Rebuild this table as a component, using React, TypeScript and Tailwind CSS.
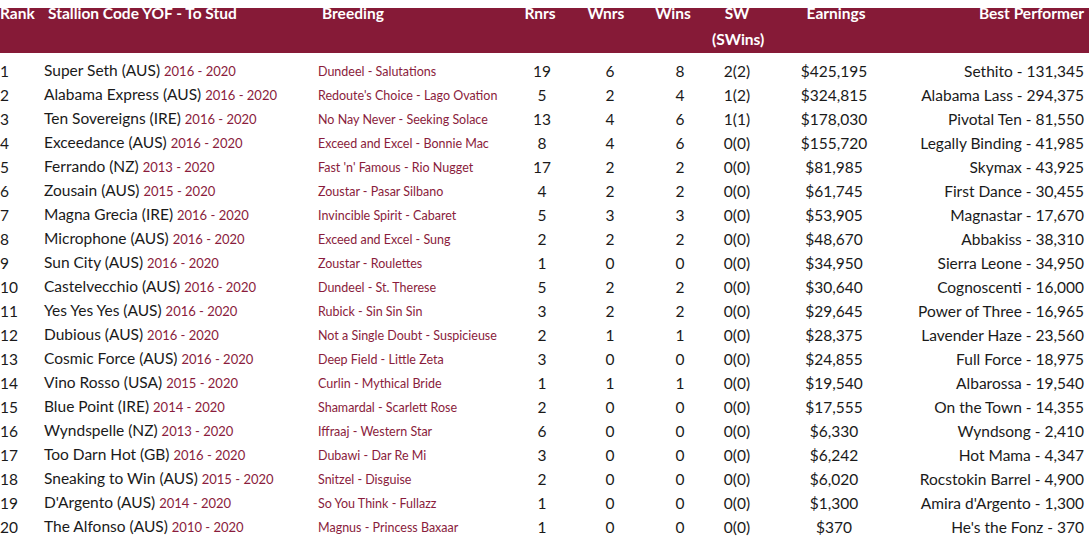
import React from "react";

type Row = [string, string, string, string, string, string, string, string, string, string];

const rows: Row[] = [
  ["1", "Super Seth (AUS)", "2016 - 2020", "Dundeel - Salutations", "19", "6", "8", "2(2)", "$425,195", "Sethito - 131,345"],
  ["2", "Alabama Express (AUS)", "2016 - 2020", "Redoute's Choice - Lago Ovation", "5", "2", "4", "1(2)", "$324,815", "Alabama Lass - 294,375"],
  ["3", "Ten Sovereigns (IRE)", "2016 - 2020", "No Nay Never - Seeking Solace", "13", "4", "6", "1(1)", "$178,030", "Pivotal Ten - 81,550"],
  ["4", "Exceedance (AUS)", "2016 - 2020", "Exceed and Excel - Bonnie Mac", "8", "4", "6", "0(0)", "$155,720", "Legally Binding - 41,985"],
  ["5", "Ferrando (NZ)", "2013 - 2020", "Fast 'n' Famous - Rio Nugget", "17", "2", "2", "0(0)", "$81,985", "Skymax - 43,925"],
  ["6", "Zousain (AUS)", "2015 - 2020", "Zoustar - Pasar Silbano", "4", "2", "2", "0(0)", "$61,745", "First Dance - 30,455"],
  ["7", "Magna Grecia (IRE)", "2016 - 2020", "Invincible Spirit - Cabaret", "5", "3", "3", "0(0)", "$53,905", "Magnastar - 17,670"],
  ["8", "Microphone (AUS)", "2016 - 2020", "Exceed and Excel - Sung", "2", "2", "2", "0(0)", "$48,670", "Abbakiss - 38,310"],
  ["9", "Sun City (AUS)", "2016 - 2020", "Zoustar - Roulettes", "1", "0", "0", "0(0)", "$34,950", "Sierra Leone - 34,950"],
  ["10", "Castelvecchio (AUS)", "2016 - 2020", "Dundeel - St. Therese", "5", "2", "2", "0(0)", "$30,640", "Cognoscenti - 16,000"],
  ["11", "Yes Yes Yes (AUS)", "2016 - 2020", "Rubick - Sin Sin Sin", "3", "2", "2", "0(0)", "$29,645", "Power of Three - 16,965"],
  ["12", "Dubious (AUS)", "2016 - 2020", "Not a Single Doubt - Suspicieuse", "2", "1", "1", "0(0)", "$28,375", "Lavender Haze - 23,560"],
  ["13", "Cosmic Force (AUS)", "2016 - 2020", "Deep Field - Little Zeta", "3", "0", "0", "0(0)", "$24,855", "Full Force - 18,975"],
  ["14", "Vino Rosso (USA)", "2015 - 2020", "Curlin - Mythical Bride", "1", "1", "1", "0(0)", "$19,540", "Albarossa - 19,540"],
  ["15", "Blue Point (IRE)", "2014 - 2020", "Shamardal - Scarlett Rose", "2", "0", "0", "0(0)", "$17,555", "On the Town - 14,355"],
  ["16", "Wyndspelle (NZ)", "2013 - 2020", "Iffraaj - Western Star", "6", "0", "0", "0(0)", "$6,330", "Wyndsong - 2,410"],
  ["17", "Too Darn Hot (GB)", "2016 - 2020", "Dubawi - Dar Re Mi", "3", "0", "0", "0(0)", "$6,242", "Hot Mama - 4,347"],
  ["18", "Sneaking to Win (AUS)", "2015 - 2020", "Snitzel - Disguise", "2", "0", "0", "0(0)", "$6,020", "Rocstokin Barrel - 4,900"],
  ["19", "D'Argento (AUS)", "2014 - 2020", "So You Think - Fullazz", "1", "0", "0", "0(0)", "$1,300", "Amira d'Argento - 1,300"],
  ["20", "The Alfonso (AUS)", "2010 - 2020", "Magnus - Princess Baxaar", "1", "0", "0", "0(0)", "$370", "He's the Fonz - 370"],
];

const grid = "grid grid-cols-[44px_274px_194px_60px_76px_64px_50px_144px_1fr]";

export default function App() {
  return (
    <div className="w-[1089px] h-[555px] bg-white overflow-hidden font-['Lato',sans-serif] text-[#1a1a1a] flex flex-col">
      <div className="mt-[8px] h-[45px] bg-[#861a37] text-white font-bold text-[15.5px] flex flex-col">
        <div className={`${grid} -mt-[8px] leading-[26px] pr-[5px]`}>
          <div>Rank</div>
          <div className="pl-[4px]">Stallion Code YOF - To Stud</div>
          <div className="pl-[4px]">Breeding</div>
          <div className="text-center pr-[4px]">Rnrs</div>
          <div className="text-center pr-[8px]">Wnrs</div>
          <div className="text-center pr-[14px]">Wins</div>
          <div className="text-center">
            SW
            <br />
            (SWins)
          </div>
          <div className="text-center pl-[4px]">Earnings</div>
          <div className="text-right">Best Performer</div>
        </div>
      </div>
      <div className="mt-[5px]">
        {rows.map((r) => (
          <div key={r[0]} className={`${grid} h-[24px] items-center text-[15.5px] pr-[5px] leading-[24px]`}>
            <div>{r[0]}</div>
            <div className="whitespace-nowrap">
              {r[1]} <span className="text-[13px] text-[#8a1c3c]">{r[2]}</span>
            </div>
            <div className="whitespace-nowrap text-[12.5px] text-[#8a1c3c] leading-[22px] mt-[2px]">{r[3]}</div>
            <div className="text-center">{r[4]}</div>
            <div className="text-center">{r[5]}</div>
            <div className="text-center">{r[6]}</div>
            <div className="text-center">{r[7]}</div>
            <div className="text-center">{r[8]}</div>
            <div className="text-right whitespace-nowrap">{r[9]}</div>
          </div>
        ))}
      </div>
    </div>
  );
}
